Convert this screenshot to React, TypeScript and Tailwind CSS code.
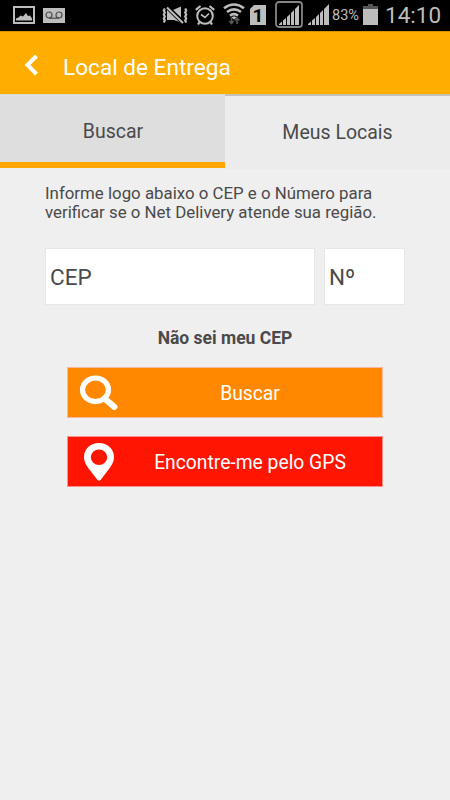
import type { ReactNode } from 'react';

function StatusBar() {
  return (
    <div className="flex h-[31px] items-start bg-black text-[#bdbdbd]">
      <svg className="mt-[6px] ml-[13px]" width="22" height="18" viewBox="0 0 22 18">
        <rect x="1" y="1" width="20" height="16" fill="none" stroke="currentColor" strokeWidth="2" />
        <path d="M3 14.500v-2l2.500-1 2-2 2.500 1 3-3.500 2 3 2-.5 2 3v2z" fill="currentColor" />
      </svg>
      <svg className="mt-[8px] ml-[8px]" width="22" height="15" viewBox="0 0 22 15">
        <rect width="22" height="15" fill="currentColor" />
        <g fill="none" stroke="#4a4a4a" strokeWidth="1.2">
          <circle cx="6" cy="7" r="3" />
          <circle cx="16" cy="7" r="3" />
          <path d="M6 10.200h10" />
        </g>
      </svg>

      {/* Muted speaker */}
      <svg className="mt-[6px] ml-[97px]" width="26" height="18" viewBox="0 0 26 18">
        <path d="M5 4h6l8-3.500v16L12 14H5z" fill="currentColor" />
        <path d="M5 1l16 15.500" stroke="#000" strokeWidth="4.500" />
        <path d="M5 1.500l16 15.500" stroke="currentColor" strokeWidth="2" />
        <path
          d="M2.800 2.500l-1 2 1 2-1 2 1 2-1 2 1 2-1 2M23.200 2.500l1 2-1 2 1 2-1 2 1 2-1 2 1 2"
          fill="none"
          stroke="currentColor"
          strokeWidth="2.200"
        />
      </svg>

      {/* Alarm */}
      <svg className="mt-[5px] ml-[7px]" width="20" height="20" viewBox="0 0 20 20">
        <g fill="none" stroke="currentColor" strokeWidth="2">
          <circle cx="10" cy="11" r="7.800" />
          <path d="M.8 4.800l4.700-3.800M19.200 4.800l-4.700-3.800M4.500 17.200L3 19.500M15.500 17.200l1.500 2.300" strokeWidth="2.200" />
          <path d="M6 9.500l4 3 4-4" strokeWidth="1.700" />
        </g>
      </svg>

      {/* Wifi with traffic arrows */}
      <svg className="mt-[3px] ml-[8px]" width="22" height="22" viewBox="0 0 22 22">
        <g fill="none" stroke="currentColor" strokeWidth="2.600">
          <path d="M1 5.200q10-7.400 20 0" />
          <path d="M4 9q7-5.200 14 0" />
          <path d="M7 12.600q4-3 8 0" />
        </g>
        <path
          d="M8.500 14.500v6M6.300 18l2.200 2.500 2.200-2.500M14 21v-6M11.800 17.500l2.200-2.500 2.200 2.500"
          fill="none"
          stroke="#555"
          strokeWidth="1.700"
        />
        <path d="M8.500 14.200l2.500-1 2.500 1-2.500 2.300z" fill="currentColor" />
      </svg>

      <div className="relative mt-[5px] ml-[5px] h-5 w-4">
        <svg width="16" height="20" viewBox="0 0 16 20">
          <path d="M4 0h12v20H0V4z" fill="currentColor" />
        </svg>
        <span className="absolute inset-0 text-center text-[19px] leading-[21px] font-bold text-black">1</span>
      </div>

      <svg className="mt-[1px] ml-[9px]" width="28" height="27" viewBox="0 0 28 27">
        <rect x="1" y="1" width="26" height="25" rx="3" fill="none" stroke="#858585" strokeWidth="1.800" />
        <path d="M4 24v-1l3-2.500V24zM8 24v-4.500l3-2.500v7zM12 24v-8l3-3v11zM16 24V12l3-3v15zM20 24V8l4-4v20z" fill="currentColor" />
      </svg>
      <svg className="mt-[4px] ml-[5px]" width="21" height="21" viewBox="0 0 21 21">
        <path d="M0 21v-1l3-2.500V21zM4 21v-4.500L7 14v7zM8 21v-8l3-3v11zM12 21V9l3-3v15zM16 21V5l5-5v21z" fill="currentColor" />
      </svg>
      <span className="mt-[6px] ml-[3px] w-[28px] text-[14.500px] leading-[20px] whitespace-nowrap">83%</span>
      <svg className="mt-[4px] ml-[3px]" width="15" height="21" viewBox="0 0 15 21">
        <path d="M5 0h5v2h5v3H0V2h5z" fill="#555" />
        <rect y="5" width="15" height="16" fill="currentColor" />
      </svg>
      <span className="mt-[1px] ml-[7px] text-[22.500px] leading-[28px] whitespace-nowrap">14:10</span>
    </div>
  );
}

function Field({ label, className }: { label: string; className: string }) {
  return (
    <div className={`flex h-[57px] items-center border border-[#e7e7e7] bg-white pt-[3px] pl-1 text-[22.500px] text-[#4a4a4a] ${className}`}>
      {label}
    </div>
  );
}

function ActionButton({ icon, label, className }: { icon: ReactNode; label: string; className: string }) {
  return (
    <button className={`flex h-[51px] w-[316px] items-center border text-[19.300px] text-white ${className}`}>
      <span className="ml-[11px] flex w-[40px] shrink-0 justify-center">{icon}</span>
      <span className="flex-1 pt-[3px] pr-px text-center">{label}</span>
    </button>
  );
}

export default function App() {
  return (
    <div className="h-[800px] w-[450px] overflow-hidden bg-[#efefef] font-['Roboto',sans-serif]">
      <StatusBar />

      <header className="flex h-[63px] items-center border-t border-[#d99200] bg-[#ffae00] text-white">
        <svg className="mt-[4px] ml-[24px]" width="14" height="22" viewBox="0 0 14 22">
          <path d="M12.500 2L3.500 11l9 9" fill="none" stroke="currentColor" strokeWidth="4" />
        </svg>
        <h1 className="mt-[10px] ml-[25px] text-[22.600px]">Local de Entrega</h1>
      </header>

      <nav className="grid h-[75px] grid-cols-2 text-[19.500px] text-[#4a4a4a]">
        <div className="mb-px flex items-center justify-center border-b-[6px] border-[#ffa600] bg-[#dedede] pt-[8px] pl-px">
          Buscar
        </div>
        <div className="flex items-center justify-center border-t-2 border-[#c6bfba] bg-[#ececec]">Meus Locais</div>
      </nav>

      <main className="flex flex-col items-center">
        <p className="mt-[15px] w-[360px] text-[16.850px] leading-[19px] text-[#4a4a4a]">
          Informe logo abaixo o CEP e o Número para
          <br />
          verificar se o Net Delivery atende sua região.
        </p>
        <div className="mt-[26px] flex w-[360px] justify-between">
          <Field label="CEP" className="w-[270px]" />
          <Field label="Nº" className="w-[81px]" />
        </div>
        <a className="mt-[21px] text-[17.500px] leading-[24px] font-bold text-[#4a4a4a]">Não sei meu CEP</a>

        <div className="mt-[17px] flex flex-col gap-[18px]">
          <ActionButton
            label="Buscar"
            className="border-[#f7b9a0] bg-[#ff8800]"
            icon={
              <svg width="40" height="36" viewBox="0 0 40 36">
                <ellipse cx="16.500" cy="14.800" rx="13" ry="11.800" fill="none" stroke="currentColor" strokeWidth="5.200" />
                <path d="M25.500 23.500l9.800 8.300" stroke="currentColor" strokeWidth="6.200" strokeLinecap="round" />
              </svg>
            }
          />
          <ActionButton
            label="Encontre-me pelo GPS"
            className="border-[#ff8f8b] bg-[#ff1500]"
            icon={
              <svg width="30" height="38" viewBox="0 0 30 38">
                <path
                  fillRule="evenodd"
                  d="M15 0C6.500 0 0 6 0 14c0 5 2.500 8.500 5 12l8.500 11q1.500 1.500 3 0L25 26c2.500-3.500 5-7 5-12C30 6 23.500 0 15 0zM15 6.500a8.200 7.700 0 1 1 0 15.400A8.200 7.700 0 1 1 15 6.500z"
                  fill="currentColor"
                />
              </svg>
            }
          />
        </div>
      </main>
    </div>
  );
}
